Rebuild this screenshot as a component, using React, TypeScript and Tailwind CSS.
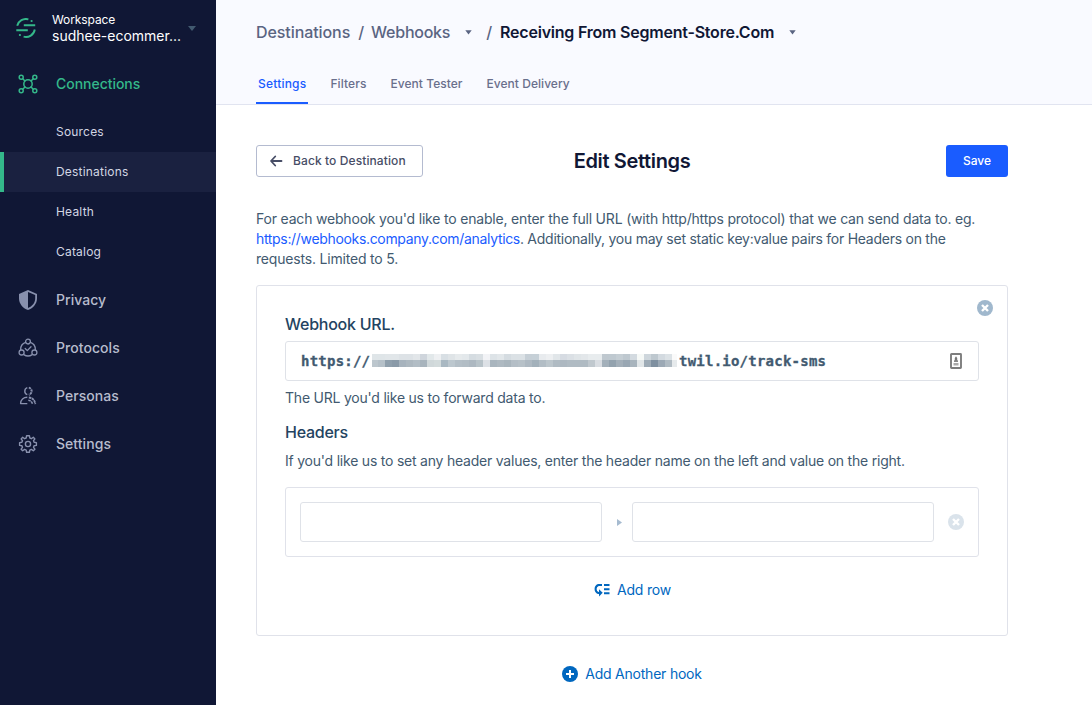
import React from "react";

const stroke = { fill: "none", stroke: "currentColor", strokeLinecap: "round", strokeLinejoin: "round" } as const;

function Logo() {
  return (
    <svg width="20" height="20" viewBox="0 0 20 20" fill="none" stroke="#34b88a" strokeWidth="1.9">
      <path d="M1.2 7.8A9 9 0 0 1 12.4 1.3" />
      <path d="M18.8 11.500A9 9 0 0 1 7.600 18.700" />
      <path d="M7.800 7.200H19.200M0.300 12.300H11.800" />
      <circle cx="15.600" cy="3" r="1.100" fill="#34b88a" stroke="none" />
      <circle cx="3.900" cy="17" r="1.100" fill="#34b88a" stroke="none" />
    </svg>
  );
}

function ConnectionsIcon() {
  return (
    <svg width="20" height="20" viewBox="0 0 20 20" {...stroke} strokeWidth="1.5">
      <circle cx="3.2" cy="3.2" r="2" />
      <circle cx="16.8" cy="3.2" r="2" />
      <circle cx="3.2" cy="16.8" r="2" />
      <circle cx="16.8" cy="16.8" r="2" />
      <circle cx="10" cy="10" r="4.2" />
      <path d="M4.700 4.700 7 7M15.300 4.700 13 7M4.700 15.300 7 13M15.300 15.300 13 13" />
    </svg>
  );
}

function ShieldIcon() {
  return (
    <svg width="20" height="20" viewBox="0 0 20 20">
      <path fill="currentColor" fillRule="evenodd" d="M10 0 19 4V8.5C19 13.5 15.3 18.2 10 20 4.700 18.200 1 13.500 1 8.500V4ZM10 2V18C14.200 16.300 17.200 12.700 17.200 8.500V5.100Z" />
    </svg>
  );
}

function ProtocolsIcon() {
  return (
    <svg width="20" height="20" viewBox="0 0 20 20" {...stroke} strokeWidth="1.300">
      <circle cx="10" cy="3.600" r="2.400" />
      <circle cx="3.600" cy="14.500" r="2.500" />
      <circle cx="16.400" cy="14.500" r="2.500" />
      <path d="M7.600 4.300A7.600 7.600 0 0 0 2.700 12M12.400 4.300A7.600 7.600 0 0 1 17.300 12M5.800 16.600A7.600 7.600 0 0 0 14.200 16.600" />
      <path d="M7.200 10.500 9.300 12.600 13 8.700" />
    </svg>
  );
}

function PersonasIcon() {
  return (
    <svg width="20" height="20" viewBox="0 0 20 20" {...stroke} strokeWidth="1.400" strokeLinecap="butt">
      <path d="M9.300 1.700A3.700 3.700 0 0 0 9.300 8.700" />
      <path d="M10.800 1.600A3.700 3.700 0 0 1 10.800 8.800" strokeWidth="2" strokeDasharray="2.300 .7" />
      <path d="M9.300 11.300C5.500 11.300 2.600 13.600 2.600 17.600H9.300" />
      <path d="M10.800 11.500C14.500 11.800 16.800 14.200 17.300 18.200" strokeDasharray="2.600 .5" strokeWidth="1.800" />
      <path d="M10.300 14.200C12.500 14.500 14 15.900 14.600 18.200" strokeDasharray="2.600 .5" strokeWidth="1.600" />
    </svg>
  );
}

function GearIcon() {
  return (
    <svg width="20" height="20" viewBox="0 0 20 20" {...stroke} strokeWidth="1.400">
      <circle cx="10" cy="10" r="2.600" />
      <path d="M8.600 1.700H11.400L11.800 4 13.400 4.700 15.300 3.300 16.900 4.900 15.500 6.700 16.100 8.300 18.400 8.600V11.400L16.100 11.700 15.500 13.300 16.900 15.200 15.300 16.800 13.400 15.400 11.800 16.100 11.400 18.300H8.600L8.200 16.100 6.600 15.400 4.700 16.800 3.100 15.200 4.500 13.300 3.900 11.700 1.600 11.400V8.600L3.900 8.300 4.500 6.700 3.100 4.900 4.700 3.300 6.600 4.700 8.200 4Z" />
    </svg>
  );
}

function Caret({ className = "" }: { className?: string }) {
  return (
    <svg width="7" height="5" viewBox="0 0 7 5" className={className}>
      <path d="M.3.300H6.700L3.500 4.500Z" fill="currentColor" />
    </svg>
  );
}

function RemoveIcon({ className }: { className: string }) {
  return (
    <svg width="16" height="16" viewBox="0 0 16 16" className={className}>
      <circle cx="8" cy="8" r="8" fill="currentColor" />
      <path d="M5 5 11 11M11 5 5 11" stroke="#fff" strokeWidth="2.400" />
    </svg>
  );
}

function ContactIcon() {
  return (
    <svg width="12" height="16" viewBox="0 0 12 16">
      <rect x="1" y="1" width="10" height="14" rx=".5" fill="#fff" stroke="#7d7d7d" strokeWidth="1.900" />
      <path d="M6 3.200 7.200 5V8.500H4.800V5Z" fill="#777" />
      <path d="M4 7.300H8V9H4Z" fill="#888" />
      <path d="M3.500 10H8.500V12.500H3.500Z" fill="#aaa" />
    </svg>
  );
}

const subItems = ["Sources", "Destinations", "Health", "Catalog"];
const mainItems = [
  { label: "Privacy", icon: <ShieldIcon /> },
  { label: "Protocols", icon: <ProtocolsIcon /> },
  { label: "Personas", icon: <PersonasIcon /> },
  { label: "Settings", icon: <GearIcon /> },
];

const maskTop =
  "dfe5e8 dfe5e8 e1e6e9 e1e6e9 dde2e6 dde2e6 e2e6e9 cfd5dc e2e8ea eef0f2 d8dfe4 dfe4e7 e6eaec e3e8eb d5dce1 d9dfe3 f2f3f6 dde3e7 e2e7ea d5dce1 dbe1e5 dbe1e5 c6cfd6 c6d0d7 e8ebee edeff1 e1e6e9 d6dbe2 dbe0e5 e0e5e8 e3e7ea e8ecee e8ecee bfc8cf bfc9d0 c5ced4 bec8cf d3dae0 f6f9f7 ced6dc bec8cf d3dae0 dce2e6 fafafa".split(" ");
const maskBottom =
  "bcc6cd b5c0c8 8f9fac 8a9aa8 a7b3bd adb8c0 b2bdc5 a8b4bd d0d8da d3dbdc a9b8c2 bcc7ce b4bfc7 b2bdc5 adb8c1 b8c3c9 dde1e6 a9b5be aeb9c1 a9b5bd b4bec6 b7c1c8 aeb9c2 a3b1bb b2bdc5 bcc6cc b0bbc3 adb8c1 b0bbc3 b0bbc3 b0bbc3 c0c8ce d9dde2 a3b0ba 93a2ae a3afb9 99a7b3 a8b4bd e1e6e8 9eabb6 7f90a0 9ca9b5 b0bbc3 e6eaec".split(" ");

function Masked() {
  return (
    <div className="mb-px grid h-[13px] w-[305px] shrink-0 grid-rows-[6px_7px]">
      {[maskTop, maskBottom].map((row, i) => (
        <div key={i} className="flex">
          {row.map((c, j) => (
            <span
              key={j}
              className={j === 0 ? "h-full w-[6px]" : j === 43 ? "h-full w-[5px]" : "h-full w-[7px]"}
              style={{ backgroundColor: "#" + c }}
            />
          ))}
        </div>
      ))}
    </div>
  );
}

export default function App() {
  return (
    <div className="flex h-[705px] w-[1092px] overflow-hidden bg-white font-['Inter',sans-serif]">
      <aside className="flex w-[216px] shrink-0 flex-col bg-[#101735]">
        <div className="flex h-14 items-center pl-4">
          <Logo />
          <div className="ml-4 w-[132px] whitespace-nowrap text-white">
            <div className="text-[12px] leading-4 tracking-[-0.1px]">Workspace</div>
            <div className="text-[14px] leading-4 tracking-[0px]">sudhee-ecommer...</div>
          </div>
          <svg width="8" height="5" viewBox="0 0 8 5" className="ml-1">
            <path d="M0 0H8L4 5Z" fill="#425a70" />
          </svg>
        </div>
        <div className="flex h-14 items-center pl-[18px] text-[#34b88a]">
          <ConnectionsIcon />
          <span className="mb-0.5 ml-[18px] text-[14px] font-medium tracking-[-0.03px]">Connections</span>
        </div>
        {subItems.map((s) => (
          <div
            key={s}
            className={
              s === "Destinations"
                ? "flex h-10 items-center border-l-4 border-[#34b88a] bg-[#1a2140] pl-[52px] text-[12px] tracking-[0.2px] text-[#d2d6e3]"
                : "flex h-10 items-center pl-14 text-[12px] tracking-[0.2px] text-[#d2d6e3]"
            }
          >
            {s}
          </div>
        ))}
        <div className="mt-1">
          {mainItems.map((m) => (
            <div key={m.label} className="flex h-12 items-center pl-[18px] text-[#8890ad]">
              {m.icon}
              <span className="mb-0.5 ml-[18px] text-[14px] font-medium tracking-[0.05px] text-[#b7bccd]">{m.label}</span>
            </div>
          ))}
        </div>
      </aside>

      <main className="flex w-[876px] flex-col">
        <header className="h-[105px] shrink-0 border-b border-[#e1e4f0] bg-[#f9faff] pl-10">
          <div className="flex h-16 items-center whitespace-nowrap text-[16px] font-medium text-[#5a6482]">
            <span className="tracking-[-0.08px]">Destinations</span>
            <span className="ml-2">/</span>
            <span className="ml-[7px] tracking-[-0.25px]">Webhooks</span>
            <Caret className="ml-[15px]" />
            <span className="ml-[14px]">/</span>
            <span className="ml-2 font-semibold tracking-[-0.22px] text-[#101735]">Receiving From Segment-Store.Com</span>
            <Caret className="ml-[15px]" />
          </div>
          <nav className="flex h-10 gap-5 pt-px text-[12px] font-medium text-[#696f8c]">
            <span className="flex items-center border-b-2 border-[#1a5cff] px-0.5 tracking-[0.2px] text-[#1a5cff]">Settings</span>
            <span className="flex items-center border-b-2 border-transparent px-0.5 tracking-[0.1px]">Filters</span>
            <span className="flex items-center border-b-2 border-transparent px-0.5 tracking-[0.040px]">Event Tester</span>
            <span className="flex items-center border-b-2 border-transparent px-0.5 tracking-[0.040px]">Event Delivery</span>
          </nav>
        </header>

        <div className="ml-10 w-[752px] pt-10">
          <div className="grid grid-cols-3 items-center">
            <button className="flex h-8 w-[167px] items-center rounded-[3px] border border-[#b4bbd0] pl-[13px] text-[12px] font-medium tracking-[0.1px] text-[#474d66]">
              <svg width="13" height="12" viewBox="0 0 13 12" fill="none" stroke="currentColor" strokeWidth="1.800" strokeLinecap="round" strokeLinejoin="round">
                <path d="M11.500 6H1.200M5.200 1.500 1 6 5.200 10.500" />
              </svg>
              <span className="ml-[10px]">Back to Destination</span>
            </button>
            <h1 className="text-center text-[20px] font-semibold leading-8 tracking-[-0.350px] text-[#101735]">Edit Settings</h1>
            <button className="h-8 w-[62px] justify-self-end rounded-[3px] bg-[#1a5cff] text-[12px] font-medium text-white">Save</button>
          </div>

          <p className="mt-8 whitespace-nowrap text-[14px] leading-5 tracking-[-0.190px] text-[#425a70]">
            For each webhook you'd like to enable, enter the full URL (with http/https protocol) that we can send data to. eg.
            <br />
            <a className="tracking-[-0.330px] text-[#1a5cff]">https://webhooks.company.com/analytics</a>
            <span className="tracking-[-0.260px]">. Additionally, you may set static key:value pairs for Headers on the</span>
            <br />
            requests. Limited to 5.
          </p>

          <section className="relative mt-4 h-[351px] rounded-[3px] border border-[#e0e2ea] px-7 pt-7 text-[14px] tracking-[-0.220px] text-[#425a70]">
            <RemoveIcon className="absolute right-[14px] top-[14px] text-[#a0b8cd]" />
            <h2 className="text-[16px] font-medium leading-5 tracking-[-0.250px] text-[#234361]">Webhook URL.</h2>
            <div className="mt-[7px] flex h-10 items-center rounded-[3px] border border-[#dfe2e8] pl-[15px] font-['DejaVu_Sans_Mono',monospace] text-[14px] font-bold text-[#425a70] [-webkit-text-stroke:0.3px_#425a70]">
              <span className="w-[71px] tracking-[0.230px]">https://</span>
              <Masked />
              <span className="ml-0.5 tracking-[0.230px]">twil.io/track-sms</span>
              <span className="ml-auto mr-4">
                <ContactIcon />
              </span>
            </div>
            <p className="mt-[7px] leading-5">The URL you'd like us to forward data to.</p>
            <h2 className="mt-[14px] text-[16px] font-medium leading-5 tracking-[-0.250px] text-[#234361]">Headers</h2>
            <p className="mt-[9px] leading-5">If you'd like us to set any header values, enter the header name on the left and value on the right.</p>
            <div className="mt-4 flex h-[70px] items-center rounded-[3px] border border-[#e0e2ea] pl-[14px]">
              <input className="h-10 w-[302px] rounded-[3px] border border-[#dfe2e8]" />
              <svg width="5" height="7" viewBox="0 0 5 7" className="ml-[15px]">
                <path d="M0 0 5 3.500 0 7Z" fill="#a6bbd0" />
              </svg>
              <input className="ml-[10px] h-10 w-[302px] rounded-[3px] border border-[#dfe2e8]" />
              <RemoveIcon className="ml-[14px] text-[#dae3eb]" />
            </div>
            <div className="mt-[23px] flex h-5 items-center justify-center text-[#0067bf]">
              <svg width="17" height="14" viewBox="0 0 17 14" fill="none" stroke="currentColor" strokeWidth="2">
                <path d="M9 2H5.300A4.300 4.300 0 0 0 5.300 10H6.500" />
                <path d="M6 6.200V13.500L9.700 9.800Z" fill="currentColor" stroke="none" />
                <path d="M11 2H16.500M11 6.200H16.500M11 10.200H16.500" />
              </svg>
              <span className="mb-0.5 ml-[7px]">Add row</span>
            </div>
          </section>

          <div className="mt-7 flex h-5 items-center justify-center text-[14px] tracking-[-0.220px] text-[#0067bf]">
            <svg width="16" height="16" viewBox="0 0 16 16">
              <circle cx="8" cy="8" r="8" fill="currentColor" />
              <path d="M8 4V12M4 8H12" stroke="#fff" strokeWidth="2" />
            </svg>
            <span className="mb-0.5 ml-[7px]">Add Another hook</span>
          </div>
        </div>
      </main>
    </div>
  );
}
